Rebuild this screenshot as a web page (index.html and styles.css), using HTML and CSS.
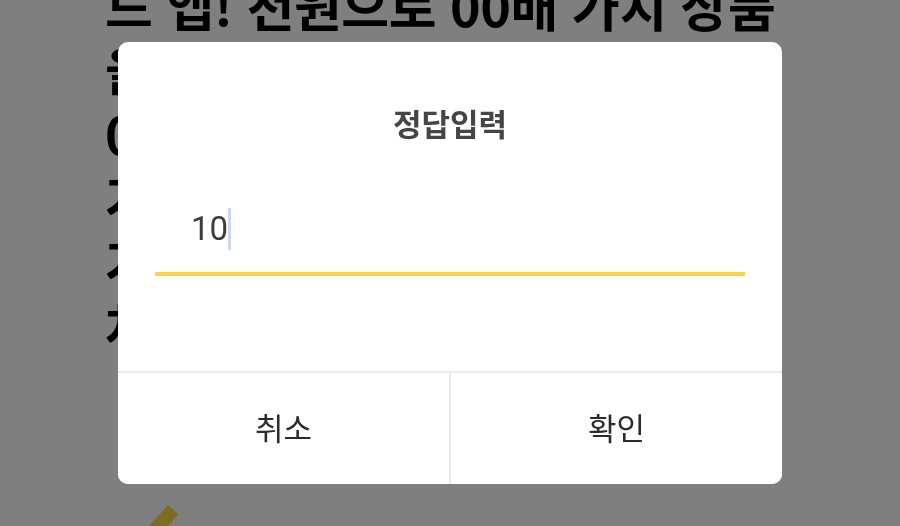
FILE: index.html
```html
<!DOCTYPE html>
<html lang="ko">
<head>
<meta charset="utf-8">
<title>정답입력</title>
<link rel="stylesheet" href="styles.css">
</head>
<body>
<div class="page">
  <h1 class="headline">
    <span class="line">드 앱! 천원으로 00배 가치 상품</span>
    <span class="line">을 구매하세요</span>
    <span class="line">0원 할인</span>
    <span class="line">가격 비교</span>
    <span class="line">가성비</span>
    <span class="line">차별화</span>
  </h1>
  <div class="deco"></div>
</div>

<div class="overlay">
  <div class="modal">
    <div class="modal-body">
      <div class="title">정답입력</div>
      <div class="field">
        <div class="value">10<span class="caret"></span></div>
      </div>
    </div>
    <div class="actions">
      <button class="btn">취소</button>
      <button class="btn">확인</button>
    </div>
  </div>
</div>
</body>
</html>
```

FILE: styles.css
```css
html, body {
  margin: 0;
  padding: 0;
  width: 900px;
  height: 526px;
  overflow: hidden;
  background: #ffffff;
  font-family: "Noto Sans CJK KR", "Noto Sans", sans-serif;
}

.page {
  position: relative;
  display: flow-root;
  height: 526px;
  padding-left: 105px;
}

.headline {
  margin: -27px 0 0 0;
  font-size: 52px;
  font-weight: 700;
  line-height: 64px;
  letter-spacing: -0.5px;
  color: #000;
  white-space: nowrap;
}

.line {
  display: block;
}

.deco {
  position: absolute;
  left: 168px;
  top: 505px;
  width: 14px;
  height: 40px;
  background: #f8d94a;
  transform: rotate(42deg);
  transform-origin: top left;
}

.overlay {
  position: fixed;
  inset: 0;
  background: rgba(0, 0, 0, 0.5);
  display: flex;
  align-items: center;
  justify-content: center;
}

.modal {
  width: 664px;
  height: 442px;
  background: #fff;
  border-radius: 10px;
  display: flex;
  flex-direction: column;
  overflow: hidden;
}

.modal-body {
  height: 329px;
  padding-top: 61px;
  box-sizing: border-box;
}

.title {
  text-align: center;
  font-size: 31px;
  font-weight: 700;
  line-height: 40px;
  color: #454545;
}

.field {
  margin: 65px 37px 0;
  padding: 0 36px 22px;
  border-bottom: 4px solid #f6d44c;
}

.value {
  display: flex;
  align-items: center;
  height: 42px;
  font-family: Roboto, "Noto Sans", sans-serif;
  font-size: 33px;
  line-height: 42px;
  color: #3d3d3d;
}

.caret {
  width: 3px;
  height: 42px;
  margin-left: 0;
  background: #cbd6f2;
}

.actions {
  flex: 1;
  display: flex;
  border-top: 2px solid #ebebeb;
}

.btn {
  flex: 1;
  border: 0;
  background: #fff;
  font-family: "Noto Sans CJK KR", "Noto Sans", sans-serif;
  font-size: 31px;
  font-weight: 400;
  color: #2b2b2b;
  padding: 0 0 4px;
  margin: 0;
}

.btn + .btn {
  border-left: 2px solid #ebebeb;
}
```
